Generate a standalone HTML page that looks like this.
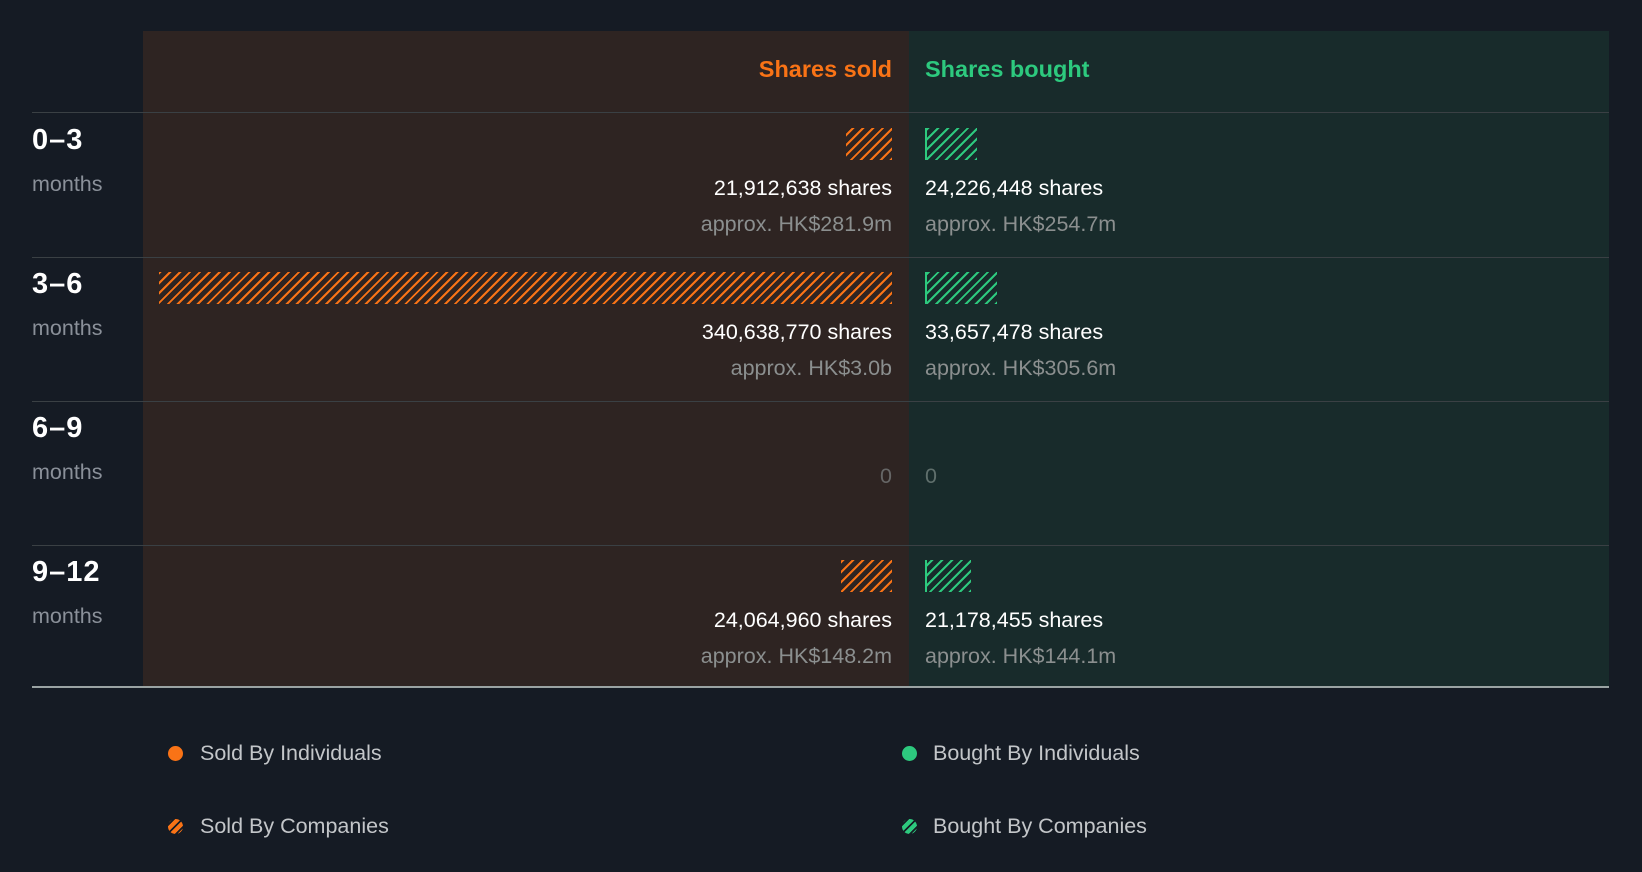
<!DOCTYPE html>
<html><head><style>
body{margin:0;width:1642px;height:872px;background:#151b24;font-family:"Liberation Sans",Roboto,sans-serif;position:relative;overflow:hidden}
.a{position:absolute}
.sold{background:#2e2422}
.bought{background:#182b2b}
.line{position:absolute;left:32px;width:1577px;height:1px;background:#3a4044}
.h{font-weight:bold;font-size:23.5px}
.lab{left:32px;color:#fff;font-weight:bold;font-size:29px;letter-spacing:1px}
.mo{left:32px;color:#8a9099;font-size:21.5px}
.sh{color:#fff;font-size:21.5px}
.ap{color:#8b8f8f;font-size:21.5px}
.r{text-align:right;right:750px}
.l{left:925px}
.ho{background:repeating-linear-gradient(-45deg,#f97316 0 2px,transparent 2px 7px)}
.hg{background:repeating-linear-gradient(-45deg,#2dc97e 0 2px,transparent 2px 7px);border-left:2px solid #2dc97e;box-sizing:border-box}
.leg{color:#c3c6c9;font-size:21.5px}
.dot{width:15px;height:15px;border-radius:50%}
</style></head><body>
<div class="a sold" style="left:143px;top:31px;width:766px;height:656px"></div>
<div class="a bought" style="left:909px;top:31px;width:700px;height:656px"></div>
<div class="line" style="top:112px"></div>
<div class="line" style="top:257px"></div>
<div class="line" style="top:401px"></div>
<div class="line" style="top:545px"></div>
<div class="line" style="top:686px;height:2px;background:#9aa3a3"></div>

<div class="a h r" style="top:56px;color:#f97316">Shares sold</div>
<div class="a h l" style="top:56px;color:#2dc97e">Shares bought</div>

<div class="a lab" style="top:124px">0–3</div><div class="a mo" style="top:172px">months</div>
<div class="a lab" style="top:268px">3–6</div><div class="a mo" style="top:316px">months</div>
<div class="a lab" style="top:412px">6–9</div><div class="a mo" style="top:460px">months</div>
<div class="a lab" style="top:556px">9–12</div><div class="a mo" style="top:604px">months</div>

<div class="a ho" style="left:846px;top:128px;width:46px;height:32px"></div>
<div class="a hg" style="left:925px;top:128px;width:52px;height:32px"></div>
<div class="a sh r" style="top:176px">21,912,638 shares</div>
<div class="a sh l" style="top:176px">24,226,448 shares</div>
<div class="a ap r" style="top:212px">approx. HK$281.9m</div>
<div class="a ap l" style="top:212px">approx. HK$254.7m</div>

<div class="a ho" style="left:159px;top:272px;width:733px;height:32px"></div>
<div class="a hg" style="left:925px;top:272px;width:72px;height:32px"></div>
<div class="a sh r" style="top:320px">340,638,770 shares</div>
<div class="a sh l" style="top:320px">33,657,478 shares</div>
<div class="a ap r" style="top:356px">approx. HK$3.0b</div>
<div class="a ap l" style="top:356px">approx. HK$305.6m</div>

<div class="a ap r" style="top:464px;color:#666">0</div>
<div class="a ap l" style="top:464px;color:#5f6f6c">0</div>

<div class="a ho" style="left:841px;top:560px;width:51px;height:32px"></div>
<div class="a hg" style="left:925px;top:560px;width:46px;height:32px"></div>
<div class="a sh r" style="top:608px">24,064,960 shares</div>
<div class="a sh l" style="top:608px">21,178,455 shares</div>
<div class="a ap r" style="top:644px">approx. HK$148.2m</div>
<div class="a ap l" style="top:644px">approx. HK$144.1m</div>

<div class="a dot" style="left:168px;top:746px;background:#f97316"></div>
<div class="a leg" style="left:200px;top:741px">Sold By Individuals</div>
<div class="a dot" style="left:902px;top:746px;background:#2dc97e"></div>
<div class="a leg" style="left:933px;top:741px">Bought By Individuals</div>
<div class="a dot" style="left:168px;top:819px;background:repeating-linear-gradient(-45deg,#f97316 0 4px,#151b24 4px 6px)"></div>
<div class="a leg" style="left:200px;top:814px">Sold By Companies</div>
<div class="a dot" style="left:902px;top:819px;background:repeating-linear-gradient(-45deg,#2dc97e 0 4px,#151b24 4px 6px)"></div>
<div class="a leg" style="left:933px;top:814px">Bought By Companies</div>
</body></html>
